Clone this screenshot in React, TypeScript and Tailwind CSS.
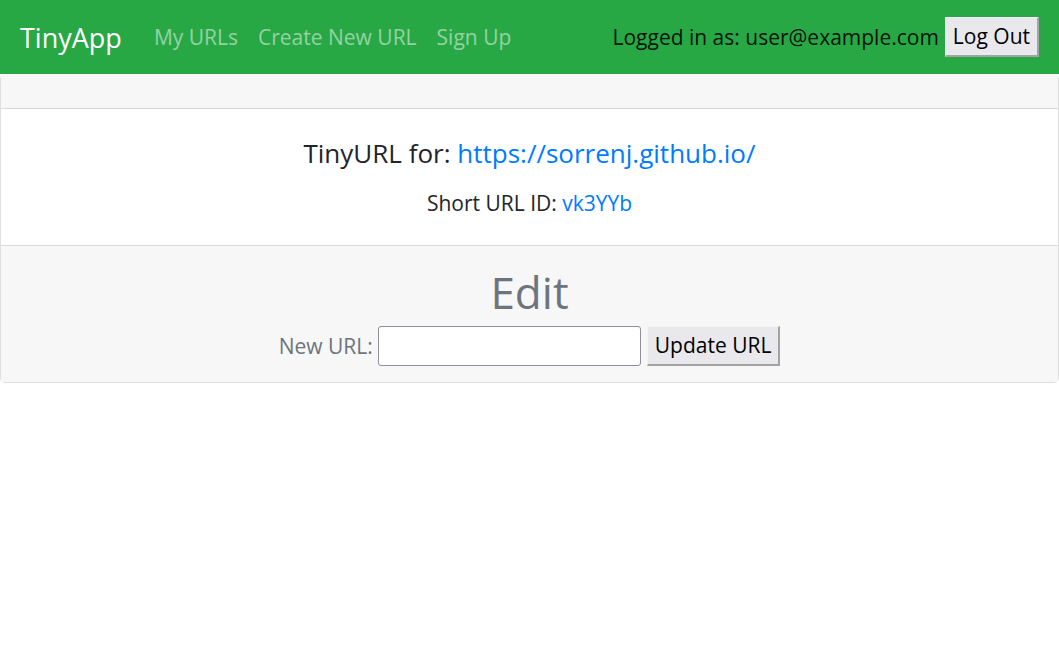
const FONT = "font-['Open_Sans',sans-serif]";

function NativeButton({ children }: { children: React.ReactNode }) {
	return (
		<button
			type="button"
			className="h-10 border-t border-l border-r-2 border-b-2 border-t-[#f4f4f6] border-l-[#f4f4f6] border-r-[#a3a3a3] border-b-[#a3a3a3] bg-[#e9e9ed] px-[7px] text-[21px] leading-none text-black"
		>
			{children}
		</button>
	);
}

export default function App() {
	return (
		<div className={`${FONT} min-h-[670px] bg-white text-[#212529]`}>
			<nav className="flex h-[74px] items-center bg-[#28a745] px-5">
				<a className="mr-[22px] text-[27px] leading-none text-white" href="#">
					TinyApp
				</a>
				<div className="flex items-center">
					{["My URLs", "Create New URL", "Sign Up"].map((label) => (
						<a
							key={label}
							href="#"
							className="px-[10px] text-[21px] leading-none text-[rgba(255,255,255,0.5)]"
						>
							{label}
						</a>
					))}
				</div>
				<div className="ml-auto flex items-center gap-[6px]">
					<span className="text-[21px] leading-none text-[rgba(0,0,0,0.9)]">
						Logged in as: user@example.com
					</span>
					<NativeButton>Log Out</NativeButton>
				</div>
			</nav>
			<div className="rounded-[5px] border border-[rgba(0,0,0,0.125)] border-t-0">
				<div className="h-[35px] border-b border-[rgba(0,0,0,0.125)] bg-[#f7f7f7]" />
				<div className="flex flex-col items-center pt-[29px] pb-[25px]">
					<h5 className="text-[26px] leading-[1.2]">
						TinyURL for:{" "}
						<a href="#" className="text-[#007bff]">
							https://sorrenj.github.io/
						</a>
					</h5>
					<p className="mt-[19px] text-[21px] leading-[1.5]">
						Short URL ID:{" "}
						<a href="#" className="text-[#007bff]">
							vk3YYb
						</a>
					</p>
				</div>
				<div className="flex flex-col items-center border-t border-[rgba(0,0,0,0.125)] bg-[#f7f7f7] pt-[20px] pb-4 text-[#6c757d]">
					<h2 className="text-[44px] leading-[1.2]">Edit</h2>
					<form className="mt-2 flex items-center">
						<label className="text-[21px] leading-none">New URL:</label>
						<input
							type="text"
							className="ml-[5px] h-10 w-[263px] rounded-[3px] border border-[#8f8f9d] bg-white"
						/>
						<span className="ml-[6px]">
							<NativeButton>Update URL</NativeButton>
						</span>
					</form>
				</div>
			</div>
		</div>
	);
}
